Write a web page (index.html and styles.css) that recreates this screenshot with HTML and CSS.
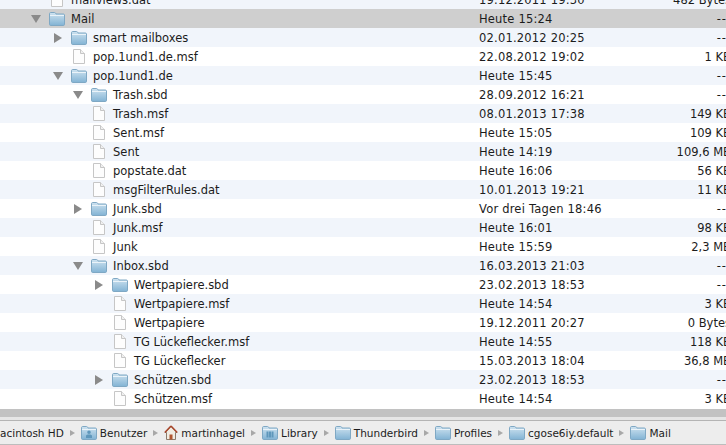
FILE: index.html
```html
<!DOCTYPE html>
<html lang="de">
<head>
    <meta charset="UTF-8">
    <meta name="viewport" content="width=device-width, initial-scale=1.0">
    <title>Mail</title>
    <link rel="stylesheet" href="styles.css">
</head>
<body>
    <!-- Icons used by the rows and the path bar -->
    <svg class="defs" width="0" height="0">
        <defs>
            <linearGradient id="folder-fill" x1="0" y1="0" x2="0" y2="1">
                <stop offset="0" stop-color="#cfe3f0"/>
                <stop offset="1" stop-color="#82b3d4"/>
            </linearGradient>
            <symbol id="folder" viewBox="0 0 16 14">
                <path d="M.5 3V1.600C.5 1 1 .5 1.600.5h4C6.200.5 6.600 1 7 2h7.400c.6 0 1.100.5 1.100 1v9.400c0 .6-.5 1.100-1.100 1.100H1.600c-.6 0-1.100-.5-1.100-1.100z" fill="url(#folder-fill)" stroke="#7fa8c4"/>
                <path d="M1 3.500h14" stroke="#eaf3f9"/>
            </symbol>
            <symbol id="file" viewBox="0 0 12 15">
                <path d="M.5.500h7l4 4v10H.500z" fill="#fdfdfd" stroke="#c6c6c6"/>
                <path d="M7.500.500v4h4" fill="#f0f0f0" stroke="#c6c6c6"/>
            </symbol>
            <symbol id="home" viewBox="0 0 14 15">
                <path d="M7 1.500 1 7.500h1.500v7h9v-7H13z" fill="#f1ece2" stroke="#8b7b6b"/>
                <path d="M5.500 14.500v-5h3v5z" fill="#b0552f"/>
                <path d="M7 1 .8 7.500M7 1l6.200 6.500" stroke="#a8452a" stroke-width="1.500" fill="none"/>
            </symbol>
            <symbol id="user-folder" viewBox="0 0 16 14">
                <use href="#folder"/>
                <path d="M5 12v-2c0-1 1-1.500 3-1.500s3 .5 3 1.500v2zM8 8a1.800 1.800 0 1 0 0-3.600A1.800 1.800 0 0 0 8 8z" fill="#5f97bb"/>
            </symbol>
            <symbol id="lib-folder" viewBox="0 0 16 14">
                <use href="#folder"/>
                <path d="M4.500 5.500h2v6h-2zM7 5.500h2v6H7zM9.500 5.500h2v6h-2z" fill="#5f97bb"/>
            </symbol>
        </defs>
    </svg>

    <div class="window">
        <div class="list">
            <div class="row odd clipped"><span class="name lvl0"><svg class="file-icon"><use href="#file"/></svg>mailviews.dat</span><span class="date">19.12.2011 19:30</span><span class="size">482 Bytes</span></div>
            <div class="row selected"><span class="name lvl0"><i class="arrow down"></i><svg class="folder-icon"><use href="#folder"/></svg>Mail</span><span class="date">Heute 15:24</span><span class="size dash">--</span></div>
            <div class="row odd"><span class="name lvl1"><i class="arrow right"></i><svg class="folder-icon"><use href="#folder"/></svg>smart mailboxes</span><span class="date">02.01.2012 20:25</span><span class="size dash">--</span></div>
            <div class="row"><span class="name lvl1"><svg class="file-icon"><use href="#file"/></svg>pop.1und1.de.msf</span><span class="date">22.08.2012 19:02</span><span class="size">1 KB</span></div>
            <div class="row odd"><span class="name lvl1"><i class="arrow down"></i><svg class="folder-icon"><use href="#folder"/></svg>pop.1und1.de</span><span class="date">Heute 15:45</span><span class="size dash">--</span></div>
            <div class="row"><span class="name lvl2"><i class="arrow down"></i><svg class="folder-icon"><use href="#folder"/></svg>Trash.sbd</span><span class="date">28.09.2012 16:21</span><span class="size dash">--</span></div>
            <div class="row odd"><span class="name lvl2"><svg class="file-icon"><use href="#file"/></svg>Trash.msf</span><span class="date">08.01.2013 17:38</span><span class="size">149 KB</span></div>
            <div class="row"><span class="name lvl2"><svg class="file-icon"><use href="#file"/></svg>Sent.msf</span><span class="date">Heute 15:05</span><span class="size">109 KB</span></div>
            <div class="row odd"><span class="name lvl2"><svg class="file-icon"><use href="#file"/></svg>Sent</span><span class="date">Heute 14:19</span><span class="size">109,6 MB</span></div>
            <div class="row"><span class="name lvl2"><svg class="file-icon"><use href="#file"/></svg>popstate.dat</span><span class="date">Heute 16:06</span><span class="size">56 KB</span></div>
            <div class="row odd"><span class="name lvl2"><svg class="file-icon"><use href="#file"/></svg>msgFilterRules.dat</span><span class="date">10.01.2013 19:21</span><span class="size">11 KB</span></div>
            <div class="row"><span class="name lvl2"><i class="arrow right"></i><svg class="folder-icon"><use href="#folder"/></svg>Junk.sbd</span><span class="date">Vor drei Tagen 18:46</span><span class="size dash">--</span></div>
            <div class="row odd"><span class="name lvl2"><svg class="file-icon"><use href="#file"/></svg>Junk.msf</span><span class="date">Heute 16:01</span><span class="size">98 KB</span></div>
            <div class="row"><span class="name lvl2"><svg class="file-icon"><use href="#file"/></svg>Junk</span><span class="date">Heute 15:59</span><span class="size">2,3 MB</span></div>
            <div class="row odd"><span class="name lvl2"><i class="arrow down"></i><svg class="folder-icon"><use href="#folder"/></svg>Inbox.sbd</span><span class="date">16.03.2013 21:03</span><span class="size dash">--</span></div>
            <div class="row"><span class="name lvl3"><i class="arrow right"></i><svg class="folder-icon"><use href="#folder"/></svg>Wertpapiere.sbd</span><span class="date">23.02.2013 18:53</span><span class="size dash">--</span></div>
            <div class="row odd"><span class="name lvl3"><svg class="file-icon"><use href="#file"/></svg>Wertpapiere.msf</span><span class="date">Heute 14:54</span><span class="size">3 KB</span></div>
            <div class="row"><span class="name lvl3"><svg class="file-icon"><use href="#file"/></svg>Wertpapiere</span><span class="date">19.12.2011 20:27</span><span class="size">0 Bytes</span></div>
            <div class="row odd"><span class="name lvl3"><svg class="file-icon"><use href="#file"/></svg>TG Lückeflecker.msf</span><span class="date">Heute 14:55</span><span class="size">118 KB</span></div>
            <div class="row"><span class="name lvl3"><svg class="file-icon"><use href="#file"/></svg>TG Lückeflecker</span><span class="date">15.03.2013 18:04</span><span class="size">36,8 MB</span></div>
            <div class="row odd"><span class="name lvl3"><i class="arrow right"></i><svg class="folder-icon"><use href="#folder"/></svg>Schützen.sbd</span><span class="date">23.02.2013 18:53</span><span class="size dash">--</span></div>
            <div class="row"><span class="name lvl3"><svg class="file-icon"><use href="#file"/></svg>Schützen.msf</span><span class="date">Heute 14:54</span><span class="size">3 KB</span></div>
        </div>

        <div class="scrollbar"></div>
        <div class="track"></div>

        <!-- Path bar, cut off on the left like the window -->
        <div class="pathbar">
            <span class="crumb first">Macintosh HD</span><i class="sep"></i>
            <span class="crumb"><svg class="crumb-icon"><use href="#user-folder"/></svg>Benutzer</span><i class="sep"></i>
            <span class="crumb"><svg class="home-icon"><use href="#home"/></svg>martinhagel</span><i class="sep"></i>
            <span class="crumb"><svg class="crumb-icon"><use href="#lib-folder"/></svg>Library</span><i class="sep"></i>
            <span class="crumb"><svg class="crumb-icon"><use href="#folder"/></svg>Thunderbird</span><i class="sep"></i>
            <span class="crumb"><svg class="crumb-icon"><use href="#folder"/></svg>Profiles</span><i class="sep"></i>
            <span class="crumb"><svg class="crumb-icon"><use href="#folder"/></svg>cgose6iy.default</span><i class="sep"></i>
            <span class="crumb"><svg class="crumb-icon"><use href="#folder"/></svg>Mail</span>
        </div>
    </div>
</body>
</html>
```
FILE: styles.css
```css
html, body {
    margin: 0;
    padding: 0;
    overflow: hidden;
}
body {
    font-family: "DejaVu Sans", sans-serif;
    font-size: 11.5px;
    color: #1c1c1c;
    background-color: #fff;
}
.defs {
    display: block;
    height: 0;
}
.window {
    width: 726px;
    height: 445px;
    overflow: hidden;
    display: flex;
    flex-direction: column;
}
.list {
    height: 409px;
    overflow: hidden;
    flex: none;
}
.row {
    display: flex;
    align-items: center;
    width: 731px;
    height: 19px;
    white-space: nowrap;
}
.row.clipped {
    margin-top: -10px;
}
.row.odd {
    background-color: #f1f5fb;
}
.row.selected {
    background-color: #cfcfcf;
}
.name {
    display: flex;
    align-items: center;
    position: relative;
    width: 479px;
    box-sizing: border-box;
    flex: none;
}
.lvl0 { padding-left: 49px; }
.lvl1 { padding-left: 71px; }
.lvl2 { padding-left: 91px; }
.lvl3 { padding-left: 112px; }
.date {
    flex: 1;
    letter-spacing: 0.2px;
}
.size {
    text-align: right;
}
.size.dash {
    letter-spacing: 1px;
    margin-right: 4px;
}
.arrow {
    position: absolute;
    width: 0;
    height: 0;
}
.arrow.down {
    margin-left: -18px;
    border-left: 5px solid transparent;
    border-right: 5px solid transparent;
    border-top: 8px solid #8a8a8a;
}
.arrow.right {
    margin-left: -17px;
    border-top: 5px solid transparent;
    border-bottom: 5px solid transparent;
    border-left: 8px solid #8a8a8a;
}
.folder-icon {
    width: 16px;
    height: 14px;
    margin-right: 6px;
}
.file-icon {
    width: 12px;
    height: 15px;
    margin-left: 2px;
    margin-right: 8px;
}
.scrollbar {
    height: 8px;
    flex: none;
    background-color: #c2c2c2;
}
.track {
    height: 3px;
    flex: none;
    background-color: #e6e6e6;
}
.pathbar {
    flex: 1;
    display: flex;
    align-items: center;
    gap: 6px;
    margin-left: -9px;
    font-size: 10.5px;
    background-color: #ededed;
    border-top: 1px solid #b4b4b4;
    border-bottom: 1px solid #bdbdbd;
    white-space: nowrap;
}
.crumb {
    display: flex;
    align-items: center;
    gap: 3px;
}
.crumb-icon {
    width: 16px;
    height: 14px;
}
.home-icon {
    width: 14px;
    height: 15px;
}
.sep {
    width: 0;
    height: 0;
    border-top: 3px solid transparent;
    border-bottom: 3px solid transparent;
    border-left: 5px solid #a8a8a8;
}
```
